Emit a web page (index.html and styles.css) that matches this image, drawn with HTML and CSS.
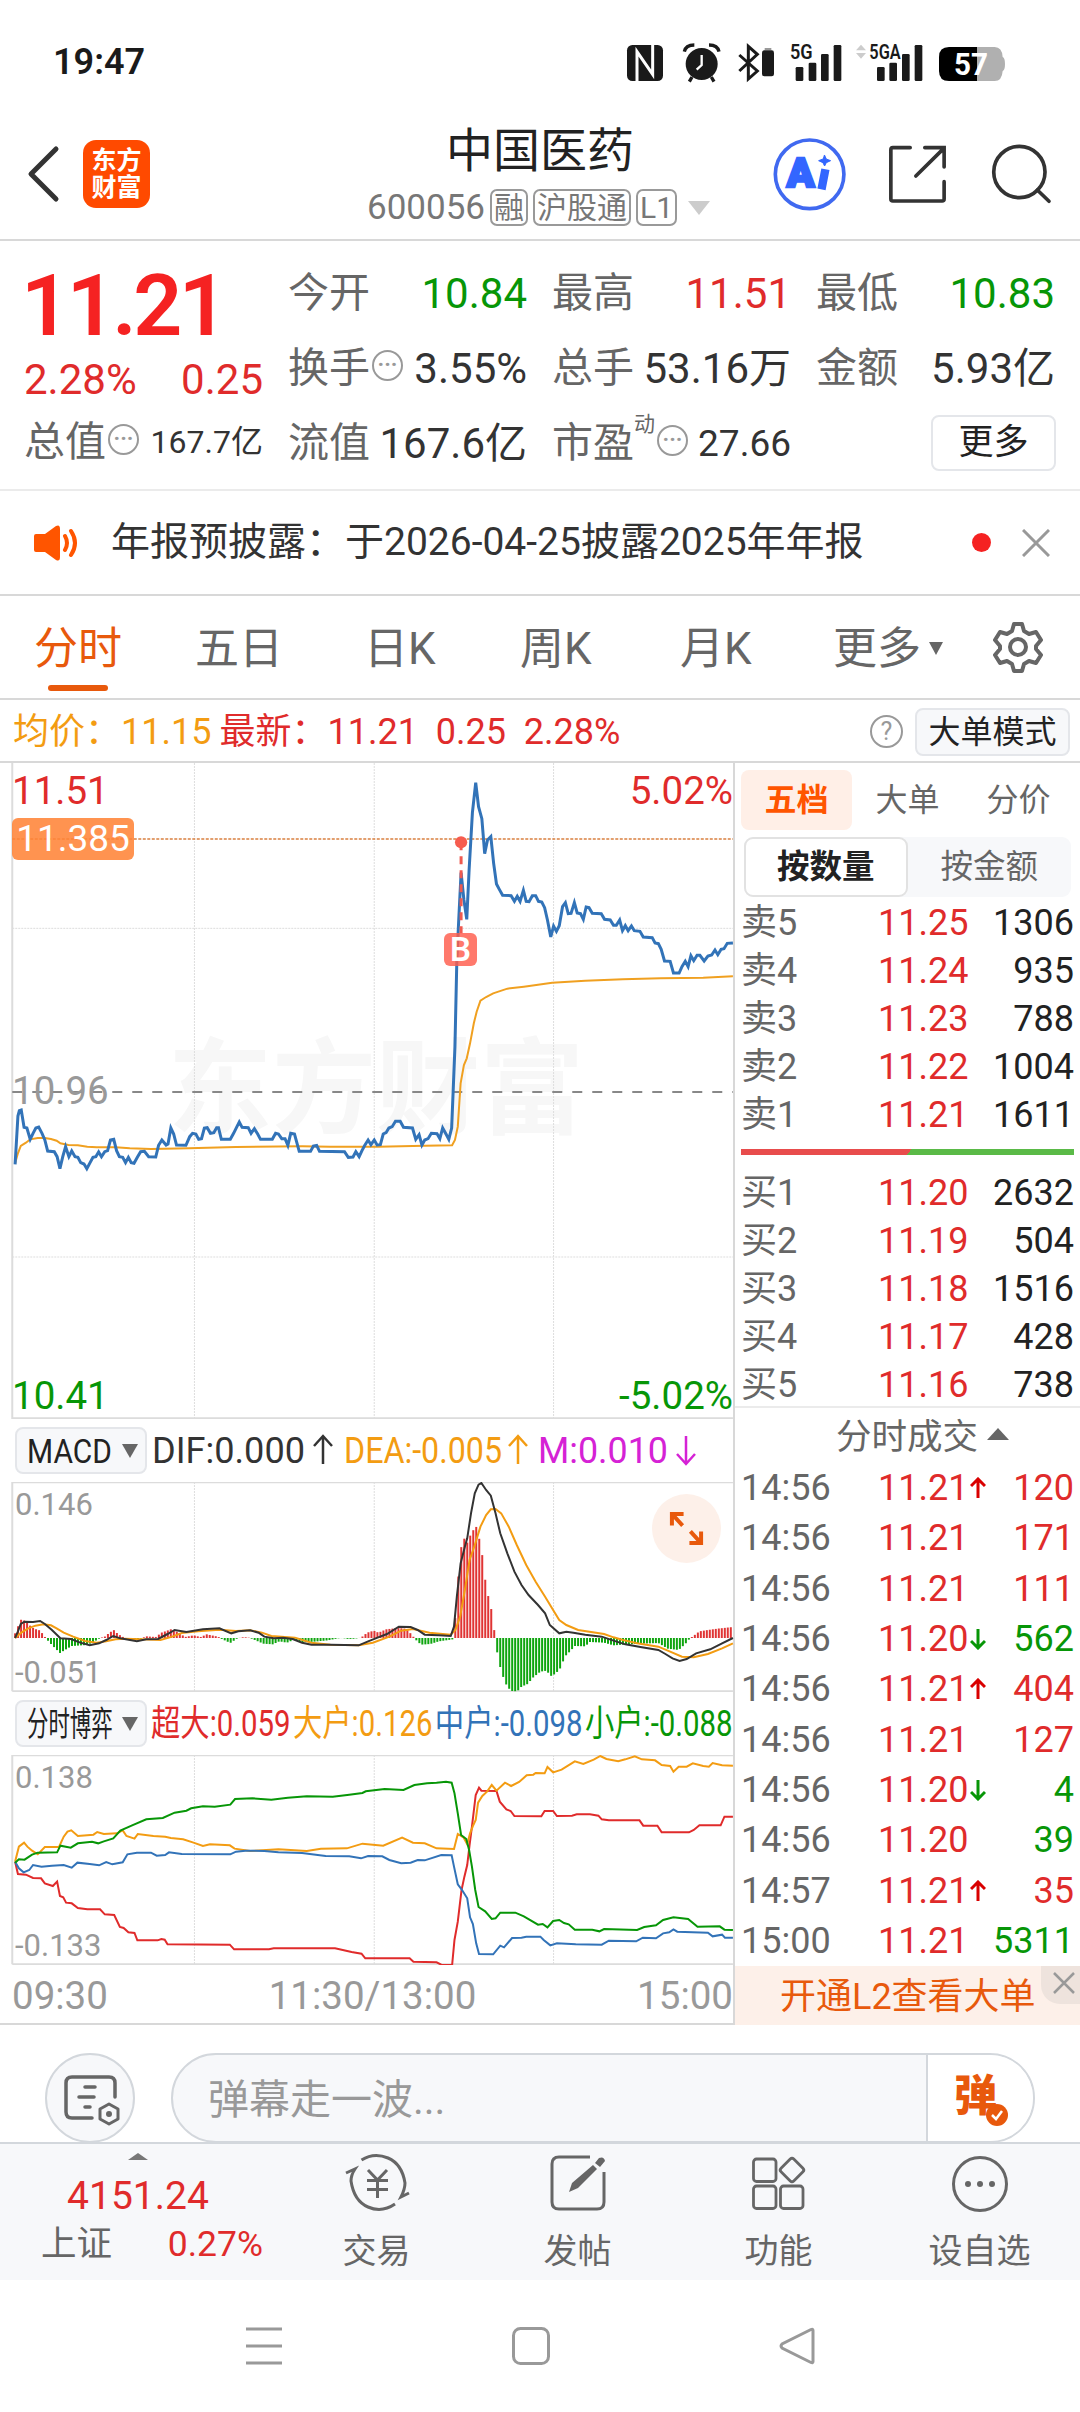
FILE: index.html
```
<!DOCTYPE html>
<html lang="zh-CN">
<head>
    <meta charset="UTF-8">
    <meta name="viewport" content="width=device-width, initial-scale=1.0">
    <title>中国医药 600056</title>
    <link rel="stylesheet" href="styles.css">
</head>
<body>
    <div class="status-bar">
        <span class="clock">19:47</span>
        <svg class="status-icons" viewBox="60 24 1200 138">
            <rect x="81" y="42" width="108" height="108" rx="16" fill="#1a1a1a"/>
            <path d="M111 150V62L158 130V42" fill="none" stroke="#fff" stroke-width="9"/>
            <circle cx="305" cy="99" r="48" fill="#1a1a1a"/>
            <path d="M253 62q4-20 30-20M357 62q-4-20-30-20" fill="none" stroke="#1a1a1a" stroke-width="10"/>
            <path d="M276 138l-8 14M334 138l8 14" stroke="#1a1a1a" stroke-width="10"/>
            <path d="M305 72v30l-15 14" fill="none" stroke="#fff" stroke-width="7"/>
            <path d="M418 72l54 48-27 24V46l27 24-54 50" fill="none" stroke="#1a1a1a" stroke-width="9"/>
            <rect x="486" y="58" width="36" height="78" rx="7" fill="#1a1a1a"/>
            <rect x="494" y="51" width="20" height="6" fill="#999"/>
            <text x="570" y="85" class="net" textLength="68" lengthAdjust="spacingAndGlyphs">5G</text>
            <g fill="#1a1a1a">
                <rect x="587" y="108" width="23" height="42" rx="4"/>
                <rect x="626" y="95" width="23" height="55" rx="4"/>
                <rect x="663" y="69" width="23" height="81" rx="4"/>
                <rect x="701" y="42" width="23" height="108" rx="4"/>
                <rect x="831" y="108" width="23" height="42" rx="4"/>
                <rect x="868" y="95" width="23" height="55" rx="4"/>
                <rect x="906" y="69" width="23" height="81" rx="4"/>
                <rect x="944" y="42" width="23" height="108" rx="4"/>
            </g>
            <path d="M768 58l15-17 15 17zM768 66l15 17 15-17z" fill="#ccc"/>
            <text x="808" y="85" class="net" textLength="94" lengthAdjust="spacingAndGlyphs">5GA</text>
            <path d="M1131 48h53q22 0 24 30q7 3 7 21t-7 21q-2 30-24 30h-53z" fill="#b0b0b0"/>
            <path d="M1131 48h-84q-30 0-30 30v42q0 30 30 30h84z" fill="#000"/>
            <text x="1062" y="132" class="battery" textLength="102" lengthAdjust="spacingAndGlyphs">57</text>
        </svg>
    </div>

    <div class="header">
        <svg class="back" viewBox="0 0 34 60"><path d="M30 5L5 30 30 55" fill="none" stroke="#333" stroke-width="5" stroke-linecap="round" stroke-linejoin="round"/></svg>
        <div class="logo">东方<br>财富</div>
        <div class="title">
            <h1>中国医药</h1>
            <div class="code">600056<i>融</i><i>沪股通</i><i>L1</i><b class="tri"></b></div>
        </div>
        <svg class="header-icons" viewBox="510 315 850 240" fill="none" stroke="#333" stroke-width="11" stroke-linecap="round">
            <circle cx="626" cy="433" r="103" stroke="#4069f0"/>
            <text x="557" y="472" class="ai" stroke="#3366ff" stroke-width="8">A</text>
            <path d="M671 376l5 11 13 5-13 6-5 10-5-10-13-6 13-5z" fill="#3366ff" stroke="#3366ff" stroke-width="3"/>
            <path d="M671 430L664 466" stroke="#3366ff" stroke-width="25" stroke-linecap="square"/>
            <path d="M928 353H876q-6 0-6 6v148q0 6 6 6h148q6 0 6-6V455M972 353h58v58M1026 358L945 438"/>
            <circle cx="1256" cy="426" r="77"/>
            <path d="M1310 480L1345 514"/>
        </svg>
    </div>

    <div class="quote">
        <div class="price-col">
            <div class="price">11.21</div>
            <div class="line change red"><span>2.28%</span><span>0.25</span></div>
            <div class="line"><label>总值</label><em>···</em><span class="s32">167.7亿</span></div>
        </div>
        <div class="stat-col">
            <div class="line"><label>今开</label><span class="green">10.84</span></div>
            <div class="line"><label>换手</label><em>···</em><span>3.55%</span></div>
            <div class="line"><label>流值</label><span>167.6亿</span></div>
        </div>
        <div class="stat-col">
            <div class="line"><label>最高</label><span class="red">11.51</span></div>
            <div class="line"><label>总手</label><span>53.16万</span></div>
            <div class="line"><label>市盈</label><sup>动</sup><em>···</em><span class="s37">27.66</span></div>
        </div>
        <div class="stat-col">
            <div class="line"><label>最低</label><span class="green">10.83</span></div>
            <div class="line"><label>金额</label><span>5.93亿</span></div>
            <div class="line"><button class="more">更多</button></div>
        </div>
    </div>

    <div class="notice">
        <svg class="speaker" viewBox="0 0 46 36"><path d="M2 9h9L22 1q4-2 4 3v28q0 5-4 3L11 27H2q-2 0-2-2V11q0-2 2-2z" fill="#ff5500"/><path d="M31 11q4 7 0 14M37 6q8 12 0 24" fill="none" stroke="#ff5500" stroke-width="4" stroke-linecap="round"/></svg>
        <span class="notice-text">年报预披露：于2026-04-25披露2025年年报</span>
        <i class="dot"></i>
        <svg class="close" viewBox="0 0 28 28"><path d="M1 1L27 27M27 1L1 27" stroke="#999" stroke-width="3"/></svg>
    </div>

    <div class="tabs">
        <span class="active">分时</span>
        <span>五日</span>
        <span>日K</span>
        <span>周K</span>
        <span>月K</span>
        <span>更多<b class="tri"></b></span>
        <svg class="gear" viewBox="0 0 52 52" fill="none" stroke="#666" stroke-width="4"><path d="M22 3h8l2 7 5 3 7-2 5 8-5 6v3l5 6-5 8-7-2-5 3-2 7h-8l-2-7-5-3-7 2-5-8 5-6v-3l-5-6 5-8 7 2 5-3z" stroke-linejoin="round"/><circle cx="26" cy="26" r="8"/></svg>
    </div>

    <div class="info">
        <span class="orange">均价：11.15</span>
        <span class="red">最新：11.21&nbsp; 0.25&nbsp; 2.28%</span>
        <em class="help">?</em>
        <button class="mode">大单模式</button>
    </div>

    <div class="main">
        <div class="charts">
            <div class="chart chart-price">
                <div class="watermark">东方财富</div>
                <svg viewBox="0 9 1557.4 1968" preserveAspectRatio="none">
                    <path class="grid" d="M412 9V1977M793 9V1977M1173 9V1977M26 505H1553M26 1491H1553"/>
                    <path class="frame" d="M26 9V1975H1553"/>
                    <path class="cur" d="M26 237H1553"/>
                    <path class="base" d="M26 996H1553"/>
                    <polyline class="avg" points="32,1210 38,1180 44,1158 55,1148 64,1138 80,1134 95,1134 108,1137 120,1142 128,1150 145,1155 165,1156 185,1160 205,1162 245,1162 275,1165 320,1167 400,1165 500,1161 640,1159 700,1160 800,1160 900,1157 958,1156 964,1140 970,1100 976,970 983,915 989,895 996,850 1004,790 1010,755 1018,722 1030,711 1045,700 1075,686 1110,680 1170,668 1240,662 1320,658 1400,655 1490,653 1553,649"/>
                    <polyline class="now" points="32,1213 38,1068 41,1052 45,1050 51,1102 57,1104 64,1138 70,1120 76,1104 82,1101 89,1120 95,1140 101,1173 115,1175 121,1190 127,1226 133,1190 139,1160 146,1190 152,1173 159,1190 165,1192 171,1208 178,1212 184,1226 190,1210 197,1192 203,1190 209,1176 215,1190 222,1175 228,1172 234,1140 241,1138 247,1172 253,1190 260,1192 266,1208 272,1192 278,1208 284,1210 291,1192 298,1175 306,1174 315,1190 330,1191 336,1156 343,1140 352,1155 356,1152 362,1104 368,1122 374,1155 394,1156 402,1130 408,1120 415,1122 421,1138 427,1136 433,1104 439,1103 446,1120 453,1118 459,1103 463,1103 469,1138 488,1138 495,1120 501,1103 507,1086 513,1102 526,1103 532,1120 539,1106 546,1122 552,1138 577,1138 584,1120 590,1122 597,1136 604,1136 610,1156 616,1120 624,1122 634,1174 658,1174 664,1158 671,1156 677,1174 730,1175 738,1192 748,1191 754,1175 761,1190 767,1172 773,1156 780,1140 786,1154 793,1140 799,1155 806,1154 812,1122 818,1118 824,1104 831,1100 838,1084 848,1084 855,1102 874,1104 881,1138 888,1124 894,1155 900,1140 907,1136 914,1120 926,1121 932,1136 938,1104 945,1122 951,1138 957,1104 960,1000 964,860 968,600 972,480 977,338 983,420 989,478 994,330 1001,158 1008,68 1014,140 1021,176 1027,281 1033,240 1040,230 1046,310 1052,372 1058,388 1065,406 1083,407 1090,424 1096,409 1102,424 1109,391 1115,424 1121,425 1128,407 1135,407 1141,424 1148,426 1154,443 1160,480 1167,531 1173,498 1179,514 1185,497 1192,440 1198,428 1204,461 1210,460 1217,428 1223,459 1230,461 1236,478 1242,441 1248,443 1255,460 1274,461 1281,478 1293,480 1300,496 1306,496 1313,480 1319,512 1325,497 1331,512 1338,498 1344,512 1356,514 1363,531 1382,533 1388,549 1395,551 1401,568 1408,603 1420,604 1427,639 1439,639 1445,620 1452,604 1458,620 1464,587 1470,602 1477,586 1483,586 1492,603 1500,588 1508,585 1515,570 1521,584 1528,568 1534,566 1541,550 1553,549"/>
                    <path class="buy-line" d="M977 247V520"/>
                    <ellipse cx="977" cy="247" rx="13" ry="18" fill="#f65c4f"/>
                </svg>
                <span class="lb top red">11.51</span>
                <span class="lb top right red">5.02%</span>
                <span class="lb cost">11.385</span>
                <span class="lb mid">10.96</span>
                <span class="lb bottom green">10.41</span>
                <span class="lb bottom right green">-5.02%</span>
                <span class="buy">B</span>
            </div>

            <div class="legend">
                <button><u class="macd">MACD</u><b class="tri"></b></button>
                <svg viewBox="0 0 582 63">
                    <text x="1" y="44" textLength="153" lengthAdjust="spacingAndGlyphs" fill="#333">DIF:0.000</text>
                    <path d="M172 17V45M163 27l9-10 9 10" stroke="#333"/>
                    <text x="193" y="44" textLength="158" lengthAdjust="spacingAndGlyphs" fill="#f39c12">DEA:-0.005</text>
                    <path d="M367 17V45M358 27l9-10 9 10" stroke="#f39c12"/>
                    <text x="387" y="44" textLength="130" lengthAdjust="spacingAndGlyphs" fill="#d522d5">M:0.010</text>
                    <path d="M535 17V45M526 35l9 10 9-10" stroke="#d522d5"/>
                </svg>
            </div>

            <div class="chart chart-sub">
                <svg viewBox="0 216 1557.4 630" preserveAspectRatio="none">
                    <path class="grid" d="M412 216V846M793 216V846M1173 216V846"/>
                    <path class="frame" d="M26 844V217H1553M26 844H1553"/>
                    <g id="macdBars"></g>
                    <polyline class="thin" stroke="#f39c12" points="32,684 45,668 60,655 75,647 92,643 108,646 120,655 135,668 155,680 180,693 205,698 225,694 245,688 265,686 300,688 340,690 365,680 385,669 420,664 465,659 500,663 530,661 555,668 575,678 625,683 660,698 700,704 760,706 790,698 825,680 850,662 875,657 910,668 955,674 965,660 975,620 985,540 995,450 1005,410 1018,350 1030,315 1040,298 1050,297 1062,310 1078,350 1095,405 1115,465 1135,515 1155,560 1172,600 1185,630 1200,645 1225,660 1280,672 1300,682 1320,690 1350,700 1395,710 1420,725 1445,740 1470,742 1500,732 1530,715 1553,700"/>
                    <polyline class="thin" stroke="#333" points="32,684 38,664 44,642 52,635 70,636 85,633 95,642 110,660 128,685 150,687 170,698 190,706 210,700 225,690 240,678 255,685 290,694 310,688 335,687 355,672 370,660 395,666 430,658 465,655 490,670 505,664 530,661 548,668 560,680 580,685 600,683 620,687 640,698 660,704 700,704 760,706 780,694 800,683 820,672 845,650 870,651 885,660 900,674 930,676 955,678 962,650 968,560 976,460 985,410 990,385 998,310 1006,250 1014,224 1020,219 1030,240 1040,257 1050,310 1060,370 1075,430 1090,485 1105,525 1120,555 1140,585 1155,610 1165,645 1185,670 1200,665 1215,668 1240,674 1275,680 1300,692 1325,703 1360,712 1395,720 1410,732 1425,745 1440,753 1455,747 1475,730 1505,718 1530,700 1553,684"/>
                </svg>
                <span class="lb small top">0.146</span>
                <span class="lb small bottom">-0.051</span>
                <div class="expand">
                    <svg viewBox="0 0 36 36" fill="none" stroke="#e8590c" stroke-width="4"><path d="M15 3H3V15M3 3L14 15M33 21V33H21M33 33L22 21"/></svg>
                </div>
            </div>

            <div class="legend">
                <button><u>分时博弈</u><b class="tri"></b></button>
                <div class="values">
                    <span class="red">超大:0.059</span>
                    <span class="orange">大户:0.126</span>
                    <span class="blue">中户:-0.098</span>
                    <span class="green">小户:-0.088</span>
                </div>
            </div>

            <div class="chart chart-sub">
                <svg viewBox="0 165 1557.4 630" preserveAspectRatio="none">
                    <path class="grid" d="M412 165V795M793 165V795M1173 165V795"/>
                    <path class="frame" d="M26 793V166H1553M26 793H1553"/>
                    <polyline class="thin" stroke="#e02b2b" points="32,485 38,522 55,524 70,534 87,535 95,550 112,558 121,545 127,588 134,592 140,608 152,610 165,624 185,628 212,628 222,643 242,645 254,681 262,684 272,697 285,699 291,721 334,721 342,717 349,719 355,733 487,734 496,748 570,748 580,745 710,745 745,756 766,761 774,775 868,775 876,785 925,787 935,794 958,795 963,720 970,665 978,570 984,530 990,495 995,435 1000,380 1008,285 1015,263 1020,272 1052,273 1059,305 1073,328 1082,333 1090,348 1147,349 1154,333 1172,333 1180,348 1212,347 1222,343 1250,343 1268,347 1275,358 1290,361 1355,361 1363,377 1393,377 1402,397 1460,397 1470,390 1482,376 1527,376 1535,350 1553,350"/>
                    <polyline class="thin" stroke="#f39c12" points="32,485 40,440 51,428 58,440 68,452 80,463 95,441 125,441 135,410 143,395 151,391 165,408 198,404 206,396 220,402 248,400 260,391 268,408 285,416 292,402 325,408 350,410 362,414 388,418 410,428 430,438 445,433 487,436 497,446 530,453 590,448 650,453 680,446 735,445 768,431 812,437 852,413 875,428 900,430 925,445 962,447 970,402 982,412 990,433 996,400 1003,375 1008,360 1013,308 1022,288 1032,275 1042,255 1052,272 1070,248 1083,258 1100,246 1116,226 1130,224 1135,219 1154,220 1160,201 1172,217 1190,209 1218,184 1236,192 1258,179 1272,168 1285,177 1310,184 1325,178 1345,169 1360,178 1388,181 1402,195 1420,198 1427,215 1438,200 1455,200 1468,190 1490,198 1502,200 1510,189 1530,196 1553,197"/>
                    <polyline class="thin" stroke="#3273b8" points="32,485 40,505 50,517 62,510 70,495 88,500 110,497 135,495 152,503 164,488 190,492 210,496 225,486 238,493 260,487 270,463 290,458 320,458 332,467 350,465 358,457 385,462 488,463 500,455 520,452 560,453 590,457 640,459 690,468 740,469 765,475 780,468 810,469 825,480 850,490 870,488 885,480 900,481 935,465 957,466 962,500 970,553 978,568 990,595 996,652 1002,672 1009,730 1015,762 1045,763 1060,737 1068,742 1085,714 1105,713 1115,710 1145,710 1152,720 1166,736 1180,730 1220,733 1275,734 1290,722 1348,724 1362,713 1390,715 1405,700 1418,697 1427,688 1435,695 1500,698 1510,709 1530,704 1536,713 1553,713"/>
                    <polyline class="thin" stroke="#079607" points="32,488 40,478 52,479 68,464 80,458 121,457 128,437 150,443 165,430 195,425 208,430 220,424 240,415 255,392 280,376 310,358 345,354 370,338 395,332 405,325 430,319 455,320 488,314 498,297 535,295 575,299 610,293 650,289 705,290 740,284 768,279 775,274 815,267 855,270 878,255 905,250 925,248 945,245 957,248 963,280 970,340 977,405 988,417 994,450 1000,500 1007,570 1014,621 1028,634 1042,657 1050,655 1060,638 1092,638 1110,649 1140,674 1150,672 1160,682 1172,663 1185,660 1195,669 1205,673 1218,689 1255,689 1270,694 1280,687 1350,690 1365,681 1390,676 1405,660 1427,652 1458,657 1478,680 1525,679 1535,689 1553,690"/>
                </svg>
                <span class="lb small top">0.138</span>
                <span class="lb small bottom">-0.133</span>
            </div>
            <div class="axis"><span>09:30</span><span>11:30/13:00</span><span>15:00</span></div>
        </div>

        <div class="side">
            <div class="side-tabs"><span class="active">五档</span><span>大单</span><span>分价</span></div>
            <div class="segment"><span class="active">按数量</span><span>按金额</span></div>
            <div class="book">
                <div><label>卖5</label><span>11.25</span><b>1306</b></div>
                <div><label>卖4</label><span>11.24</span><b>935</b></div>
                <div><label>卖3</label><span>11.23</span><b>788</b></div>
                <div><label>卖2</label><span>11.22</span><b>1004</b></div>
                <div><label>卖1</label><span>11.21</span><b>1611</b></div>
            </div>
            <div class="ratio"></div>
            <div class="book">
                <div><label>买1</label><span>11.20</span><b>2632</b></div>
                <div><label>买2</label><span>11.19</span><b>504</b></div>
                <div><label>买3</label><span>11.18</span><b>1516</b></div>
                <div><label>买4</label><span>11.17</span><b>428</b></div>
                <div><label>买5</label><span>11.16</span><b>738</b></div>
            </div>
            <div class="ticks-title">分时成交<b class="tri"></b></div>
            <div class="ticks">
                <div><label>14:56</label><span>11.21</span><svg viewBox="0 0 16 22"><path d="M8 21V2M1 9l7-7 7 7" stroke="#d90000"/></svg><b class="red">120</b></div>
                <div><label>14:56</label><span>11.21</span><b class="red">171</b></div>
                <div><label>14:56</label><span>11.21</span><b class="red">111</b></div>
                <div><label>14:56</label><span>11.20</span><svg viewBox="0 0 16 22"><path d="M8 1V20M1 13l7 7 7-7" stroke="#079607"/></svg><b class="green">562</b></div>
                <div><label>14:56</label><span>11.21</span><svg viewBox="0 0 16 22"><path d="M8 21V2M1 9l7-7 7 7" stroke="#d90000"/></svg><b class="red">404</b></div>
                <div><label>14:56</label><span>11.21</span><b class="red">127</b></div>
                <div><label>14:56</label><span>11.20</span><svg viewBox="0 0 16 22"><path d="M8 1V20M1 13l7 7 7-7" stroke="#079607"/></svg><b class="green">4</b></div>
                <div><label>14:56</label><span>11.20</span><b class="green">39</b></div>
                <div><label>14:57</label><span>11.21</span><svg viewBox="0 0 16 22"><path d="M8 21V2M1 9l7-7 7 7" stroke="#d90000"/></svg><b class="red">35</b></div>
                <div><label>15:00</label><span>11.21</span><b class="green">5311</b></div>
            </div>
            <div class="banner">开通L2查看大单
                <i><svg viewBox="0 0 22 22"><path d="M1 1L21 21M21 1L1 21" stroke="#999" stroke-width="2.5"/></svg></i>
            </div>
        </div>
    </div>

    <div class="chat">
        <div class="chat-set">
            <svg viewBox="0 0 56 52" fill="none" stroke="#666" stroke-width="3.5" stroke-linecap="round"><path d="M51 22V8q0-6-6-6H8Q2 2 2 8v29q0 6 6 6h20"/><path d="M21 12h10M15 22h15M21 32h5"/><path d="M45 29l9 5v10l-9 5-9-5V34z" stroke-width="3" stroke-linejoin="round"/><circle cx="45" cy="39" r="1.5" stroke-width="3"/></svg>
        </div>
        <div class="chat-input">
            <span>弹幕走一波...</span>
            <div class="dan">弹<svg viewBox="0 0 24 24"><circle cx="12" cy="12" r="11" fill="#e8590c"/><path d="M7 12l4 4 6-8" fill="none" stroke="#fff" stroke-width="2.5"/></svg></div>
        </div>
    </div>

    <div class="nav">
        <div class="index">
            <b class="tri"></b>
            <div class="point">4151.24</div>
            <div class="index-row"><span>上证</span><span class="red">0.27%</span></div>
        </div>
        <div class="nav-item">
            <svg viewBox="0 0 66 60" fill="none" stroke="#666" stroke-width="3"><path d="M17.500 7Q30-1 44 5T61 30Q61 36 57 44l8-4M51 51Q38 60 24 54T7 28Q7 22 11 16L2 20"/><path d="M24 17l9.500 10L43 17M23 27.500h21M23 36.500h21M33.500 27v18"/></svg>
            交易
        </div>
        <div class="nav-item">
            <svg viewBox="0 0 66 60"><path d="M45 4H14Q7 4 7 11v38q0 7 7 7h38q7 0 7-7V19" fill="none" stroke="#666" stroke-width="3"/><path d="M24 39l3-9 21-18 4 4-19 19zM50 10l4-5q5-2 6 3l-5 6z" fill="#666"/></svg>
            发帖
        </div>
        <div class="nav-item">
            <svg viewBox="0 0 66 60" fill="none" stroke="#666" stroke-width="2.800"><rect x="7.500" y="6" width="22.500" height="22.500" rx="3"/><rect x="7.500" y="33" width="22.500" height="22.500" rx="3"/><rect x="34.500" y="33" width="22.500" height="22.500" rx="3"/><rect x="37" y="8" width="18" height="18" rx="2.500" transform="rotate(45 46 17)"/></svg>
            功能
        </div>
        <div class="nav-item">
            <svg viewBox="0 0 66 60"><circle cx="33" cy="31" r="26.500" fill="none" stroke="#666" stroke-width="3"/><g fill="#666"><circle cx="21" cy="31" r="3"/><circle cx="33" cy="31" r="3"/><circle cx="45" cy="31" r="3"/></g></svg>
            设自选
        </div>
    </div>

    <div class="system">
        <svg viewBox="0 0 38 38"><path d="M1 2h36M1 19h36M1 36h36"/></svg>
        <svg viewBox="0 0 38 38"><rect x="1.500" y="1.500" width="35" height="35" rx="7"/></svg>
        <svg viewBox="0 0 38 38"><path d="M35 3.500v31q0 2-2 1L4 21q-2-2 0-4L33 2.500q2-1 2 1z"/></svg>
    </div>

    <script>
        // envelope of the MACD histogram, the zero line is at y = 684
        const zero = 684;
        const macd = [
            [32, 670], [38, 650], [44, 629], [52, 632], [62, 645], [72, 656], [84, 661], [92, 674], [97, 684],
            [104, 696], [115, 712], [127, 729], [140, 718], [152, 708], [185, 705], [203, 692], [212, 684],
            [222, 680], [232, 668], [241, 660], [250, 672], [262, 682], [270, 688], [290, 691], [301, 684],
            [310, 679], [330, 681], [342, 668], [362, 658], [378, 667], [392, 681], [410, 676], [425, 681],
            [438, 673], [462, 680], [470, 687], [488, 699], [502, 686], [512, 682], [525, 682], [535, 687],
            [558, 701], [578, 703], [592, 694], [608, 698], [622, 690], [640, 697], [665, 695], [695, 691],
            [716, 685], [726, 684], [738, 687], [752, 686], [765, 683], [778, 668], [792, 662], [802, 668],
            [818, 658], [842, 654], [860, 656], [872, 673], [880, 688], [892, 704], [912, 702], [930, 694],
            [950, 690], [960, 688], [963, 660], [970, 515], [977, 413], [984, 385], [990, 398], [996, 378],
            [1003, 360], [1008, 345], [1014, 376], [1021, 425], [1027, 500], [1034, 555], [1041, 598], [1047, 658],
            [1052, 715], [1058, 762], [1066, 800], [1075, 832], [1085, 843], [1096, 844], [1105, 830], [1118, 822],
            [1130, 802], [1145, 785], [1158, 782], [1167, 798], [1176, 792], [1186, 778], [1198, 738], [1208, 724],
            [1218, 708], [1240, 709], [1250, 696], [1280, 698], [1300, 706], [1340, 702], [1395, 699], [1415, 716],
            [1438, 720], [1452, 702], [1462, 685], [1470, 677], [1482, 664], [1500, 660], [1520, 656], [1553, 651]
        ];
        let bars = "";
        for (let x = 32; x <= 1555; x += 6.345) {
            const i = macd.findIndex(p => p[0] >= x);
            if (i < 0) break;
            const b = macd[i];
            const a = macd[i - 1] || b;
            const y = b === a ? b[1] : a[1] + (b[1] - a[1]) * (x - a[0]) / (b[0] - a[0]);
            bars += `<path d="M${x.toFixed(1)} ${zero}V${y.toFixed(1)}" stroke="${y < zero ? "#e03434" : "#0fa50f"}"/>`;
        }
        document.getElementById("macdBars").innerHTML = bars;
    </script>
</body>
</html>
```
FILE: styles.css
```
* {
    box-sizing: border-box;
}
body {
    margin: 0;
    width: 1080px;
    height: 2412px;
    background: #fff;
    color: #333;
    font-family: Roboto, "Noto Sans CJK SC", sans-serif;
    font-size: 36px;
    line-height: 1;
    overflow: hidden;
    white-space: nowrap;
}
i, em, u {
    font-style: normal;
    text-decoration: none;
}
svg {
    display: block;
    flex: none;
}
button {
    font-family: inherit;
    line-height: 1;
    padding: 0;
    color: #222;
    background: #f7f8fa;
    border: 2px solid #e4e6ea;
    border-radius: 8px;
}
.red {
    color: #e02b2b;
}
.green {
    color: #079607;
}
.orange {
    color: #f39c12;
}
.blue {
    color: #3273b8;
}
.tri {
    display: inline-block;
    border: 8px solid transparent;
    border-top: 14px solid #666;
    border-bottom: 0;
}

/* status bar */
.status-bar {
    height: 123px;
    padding: 0 60px 0 53px;
    display: flex;
    justify-content: space-between;
    align-items: center;
}
.clock {
    font-size: 36px;
    font-weight: 600;
    color: #1a1a1a;
}
.status-icons {
    width: 400px;
    height: 46px;
}
.net {
    font-size: 62px;
    font-weight: 600;
    fill: #1a1a1a;
}
.battery {
    font-size: 92px;
    font-weight: 700;
    fill: #fff;
}

/* header */
.header {
    height: 118px;
    padding: 0 26px 0 26px;
    border-bottom: 2px solid #d8d8d8;
    display: flex;
    align-items: center;
}
.back {
    width: 34px;
    height: 60px;
    margin-top: -14px;
}
.logo {
    width: 67px;
    height: 68px;
    margin: -14px 0 0 23px;
    padding-top: 7px;
    border-radius: 13px;
    background: #ff4a00;
    color: #fff;
    font-size: 25px;
    font-weight: 700;
    line-height: 27px;
    text-align: center;
}
.title {
    width: 380px;
    margin: -9px 0 0 200px;
    text-align: center;
}
.title h1 {
    margin: 0;
    font-size: 47px;
    font-weight: 400;
    color: #222;
}
.code {
    display: flex;
    align-items: center;
    margin: 15px 0 0 17px;
    font-size: 35px;
    color: #777;
}
.code i {
    height: 37px;
    margin-left: 5px;
    padding: 0 2px;
    border: 2px solid #999;
    border-radius: 7px;
    font-size: 30px;
    line-height: 33px;
}
.code .tri {
    margin-left: 11px;
    border-width: 14px 11px 0;
    border-top-color: #ccc;
}
.header-icons {
    width: 283px;
    height: 80px;
    margin: -12px 0 0 auto;
}
.ai {
    font-size: 122px;
    font-weight: 900;
    fill: #3366ff;
}

/* quote */
.quote {
    height: 250px;
    padding: 15px 25px 0 24px;
    border-bottom: 2px solid #ebebeb;
    display: flex;
}
.price-col {
    width: 239px;
    padding-top: 6px;
}
.price {
    height: 81px;
    margin-left: -3px;
    font-size: 86px;
    line-height: 88px;
    font-weight: 600;
    letter-spacing: -3.5px;
    color: #f52222;
}
.stat-col {
    width: 239px;
    margin-left: 25px;
}
.line {
    height: 75px;
    display: flex;
    align-items: center;
    font-size: 42px;
}
.price-col .line + .line {
    height: 50px;
}
.price-col .line {
    height: 74px;
}
.line span {
    margin-left: auto;
}
.change span:first-child {
    margin-left: 0;
}
.line label {
    color: #666;
    font-size: 41px;
}
.line em {
    width: 31px;
    height: 31px;
    margin: -6px 0 0 2px;
    border: 2.5px solid #999;
    border-radius: 50%;
    color: #999;
    font-size: 22px;
    line-height: 26px;
    font-weight: 700;
    text-align: center;
}
.line sup {
    align-self: flex-start;
    margin-top: 6px;
    font-size: 21px;
    line-height: 24px;
    color: #666;
}
.line .s32 {
    font-size: 32px;
}
.line .s37 {
    font-size: 37px;
}
.more {
    width: 125px;
    height: 56px;
    margin: -2px -1px 0 auto;
    background: #fff;
    font-size: 35px;
    line-height: 48px;
}

/* notice */
.notice {
    height: 105px;
    padding: 0 30px 0 34px;
    border-bottom: 2px solid #d8d8d8;
    display: flex;
    align-items: center;
}
.speaker {
    width: 46px;
    height: 36px;
}
.notice-text {
    margin-left: 31px;
    font-size: 39px;
}
.dot {
    width: 19px;
    height: 19px;
    margin-left: auto;
    border-radius: 50%;
    background: #f52222;
}
.close {
    width: 28px;
    height: 28px;
    margin-left: 31px;
}

/* period tabs */
.tabs {
    height: 104px;
    padding: 3px 36px 0 34px;
    border-bottom: 2px solid #d8d8d8;
    display: grid;
    grid-template-columns: 161px 169px 156px 160px 153px 1fr 52px;
    align-items: center;
    font-size: 44px;
    color: #666;
}
.tabs .active {
    position: relative;
    color: #e8590c;
}
.tabs .active::after {
    content: "";
    position: absolute;
    left: 14px;
    bottom: -20px;
    width: 60px;
    height: 6px;
    border-radius: 3px;
    background: #e8590c;
}
.tabs .tri {
    margin-left: 8px;
    vertical-align: 9px;
    border-width: 13px 7px 0;
}
.gear {
    width: 52px;
    height: 52px;
    margin-top: -4px;
}

/* average / latest line */
.info {
    height: 61px;
    padding: 2px 10px 0 13px;
    display: flex;
    align-items: center;
}
.info .red {
    margin-left: 8px;
}
.help {
    width: 33px;
    height: 33px;
    margin: 0 12px 0 auto;
    border: 2.5px solid #999;
    border-radius: 50%;
    color: #999;
    font-size: 25px;
    line-height: 29px;
    text-align: center;
}
.mode {
    width: 155px;
    height: 48px;
    font-size: 32px;
}

/* main area */
.main {
    height: 1264px;
    border-top: 2px solid #d8d8d8;
    border-bottom: 2px solid #d8d8d8;
    display: flex;
}
.charts {
    width: 735px;
    border-right: 2px solid #d8d8d8;
}
.chart {
    position: relative;
}
.chart > svg {
    position: relative;
    width: 735px;
    height: 100%;
}
.chart-price {
    height: 656px;
}
.chart-sub {
    height: 210px;
}
.chart path, .chart polyline {
    fill: none;
    vector-effect: non-scaling-stroke;
}
.grid {
    stroke: #ddd;
    stroke-dasharray: 2 1;
}
.frame {
    stroke: #dcdcdc;
    stroke-width: 2;
}
.cur {
    stroke: #d98040;
    stroke-width: 1.5;
    stroke-dasharray: 3 1.5;
}
.base {
    stroke: #888;
    stroke-width: 2;
    stroke-dasharray: 10 10;
}
.avg {
    stroke: #f0a020;
    stroke-width: 2;
}
.now {
    stroke: #3273b8;
    stroke-width: 3;
}
.buy-line {
    stroke: #ef5a50;
    stroke-width: 3;
    stroke-dasharray: 8 6;
}
.thin {
    stroke-width: 2;
}
#macdBars path {
    stroke-width: 2;
}
.watermark {
    position: absolute;
    left: 168px;
    top: 276px;
    font-size: 104px;
    font-weight: 700;
    color: #f7f7f7;
}
.lb {
    position: absolute;
    left: 12px;
    font-size: 38.5px;
    color: #999;
}
.lb.red {
    color: #e02b2b;
}
.lb.green {
    color: #079607;
}
.lb.right {
    left: auto;
    right: 0;
}
.chart-price .top {
    top: 9px;
}
.chart-price .bottom {
    bottom: 4px;
}
.chart-price .mid {
    top: 309px;
}
.chart-price .cost {
    left: 12px;
    top: 55px;
    width: 122px;
    height: 42px;
    border-radius: 6px;
    background: rgba(255, 132, 56, 0.88);
    color: #fff;
    font-size: 37px;
    line-height: 42px;
    text-align: center;
}
.buy {
    position: absolute;
    left: 444px;
    top: 170px;
    width: 33px;
    height: 33px;
    border-radius: 6px;
    background: rgba(255, 92, 76, 0.82);
    color: #fff;
    font-size: 33px;
    font-weight: 600;
    line-height: 34px;
    text-align: center;
}
.lb.small {
    left: 15px;
    font-size: 31px;
}
.small.top {
    top: 7px;
}
.small.bottom {
    bottom: 4px;
}
.expand {
    position: absolute;
    left: 652px;
    top: 12px;
    width: 69px;
    height: 69px;
    padding: 17px;
    border-radius: 50%;
    background: #fdf0e9;
}
.legend {
    height: 63px;
    padding-left: 15px;
    display: flex;
    align-items: center;
}
.legend button {
    display: flex;
    flex: none;
    align-items: center;
    width: 132px;
    height: 47px;
    padding-left: 10px;
}
.legend .tri {
    margin-left: 9px;
}
/* condensed captions */
.legend u {
    width: 86px;
    font-size: 34px;
    text-align: left;
    transform: scaleX(0.63);
    transform-origin: left;
}
.legend .macd {
    transform: scaleX(0.88);
}
.values {
    display: flex;
    gap: 3px;
    width: 578px;
    margin-left: 4px;
    transform: scaleX(0.815);
    transform-origin: left;
}
.legend svg {
    width: 582px;
    height: 63px;
    margin-left: 4px;
    fill: none;
    stroke-width: 2.5;
}
.axis {
    height: 60px;
    padding: 3px 0 0 12px;
    display: flex;
    align-items: center;
    justify-content: space-between;
    font-size: 38.5px;
    color: #999;
}

/* order book */
.side {
    width: 345px;
    padding-left: 6px;
}
.side-tabs {
    display: flex;
    height: 60px;
    margin-top: 7px;
    line-height: 60px;
    text-align: center;
    font-size: 32px;
    color: #666;
}
.side-tabs span {
    width: 111px;
}
.side-tabs .active {
    border-radius: 8px;
    background: #ffefe7;
    color: #ff5500;
    font-weight: 700;
}
.segment {
    display: flex;
    width: 327px;
    height: 60px;
    margin: 7px 0 2px 3px;
    border-radius: 9px;
    background: #f7f8fa;
    line-height: 60px;
    text-align: center;
    font-size: 32.5px;
    color: #666;
}
.segment span {
    width: 50%;
}
.segment .active {
    border: 2px solid #e2e2e2;
    border-radius: 9px;
    background: #fff;
    color: #222;
    font-weight: 700;
    line-height: 56px;
}
.book div, .ticks div {
    display: flex;
    align-items: center;
    height: 48px;
    padding: 0 6px 0 0;
}
.book label, .ticks label {
    width: 137px;
    color: #666;
}
.book span, .ticks span {
    color: #e02b2b;
}
.book b, .ticks b {
    margin-left: auto;
    font-weight: 400;
}
.book b {
    color: #222;
}
.ratio {
    width: 333px;
    height: 6px;
    margin: 10px 0 14px;
    background: linear-gradient(125deg, #e84c4c 50.5%, #5aba47 50.5%);
}
.ticks-title {
    height: 57px;
    margin: -3px 0 0 -6px;
    padding-left: 101px;
    border-top: 2px solid #ebebeb;
    font-size: 35.5px;
    line-height: 58px;
    color: #666;
}
.ticks-title .tri {
    margin-left: 9px;
    vertical-align: 9px;
    border: 11px solid transparent;
    border-top: 0;
    border-bottom: 12px solid #666;
}
.ticks div {
    height: 50.3px;
}
.ticks svg {
    width: 16px;
    height: 22px;
    margin-left: 2px;
    fill: none;
    stroke-width: 3;
}
.banner {
    position: relative;
    height: 59px;
    margin-left: -6px;
    padding-left: 45px;
    background: #fdf0e9;
    color: #e8590c;
    line-height: 63px;
}
.banner i {
    position: absolute;
    right: 0;
    top: 0;
    width: 39px;
    height: 38px;
    padding: 6px 0 0 12px;
    border-bottom-left-radius: 19px;
    background: #eee3dd;
}
.banner svg {
    width: 22px;
    height: 22px;
}

/* comment input */
.chat {
    height: 119px;
    padding: 28px 45px 0;
    border-bottom: 2px solid #d3d7dc;
    display: flex;
}
.chat-set {
    width: 90px;
    height: 90px;
    padding: 20px 17px;
    border: 2px solid #d3d7dc;
    border-radius: 50%;
    background: #f7f8fa;
}
.chat-set svg {
    width: 56px;
    height: 52px;
}
.chat-input {
    display: flex;
    width: 865px;
    height: 90px;
    margin-left: 36px;
    padding-left: 35px;
    border: 2px solid #d3d7dc;
    border-radius: 45px;
    background: #f7f8fa;
    font-size: 41px;
    line-height: 90px;
    color: #999;
    overflow: hidden;
}
.dan {
    position: relative;
    width: 107px;
    margin-left: auto;
    padding-left: 26px;
    border-left: 2px solid #d3d7dc;
    background: #fff;
    color: #e8590c;
    font-size: 43px;
    font-weight: 900;
    line-height: 82px;
}
.dan svg {
    position: absolute;
    left: 57px;
    top: 48px;
    width: 24px;
    height: 24px;
}

/* bottom navigation */
.nav {
    height: 136px;
    background: #f7f8fa;
    display: flex;
    color: #666;
    font-size: 34px;
}
.index {
    width: 276px;
    padding-top: 4px;
    text-align: center;
}
.index .tri {
    display: block;
    width: 20px;
    margin: 5px auto 0;
    border: 10px solid transparent;
    border-top: 0;
    border-bottom: 7px solid #777;
}
.point {
    margin-top: 17px;
    font-size: 39px;
    color: #e02b2b;
}
.index-row {
    display: flex;
    justify-content: space-between;
    margin-top: 11px;
    padding: 0 13px 0 41px;
    font-size: 35.5px;
}
.nav-item {
    width: 201px;
    padding-top: 9px;
    text-align: center;
}
.nav-item svg {
    width: 66px;
    height: 60px;
    margin: 0 auto 21px;
}

/* system keys */
.system {
    height: 132px;
    padding: 0 264px 0 245px;
    display: flex;
    align-items: center;
    justify-content: space-between;
}
.system svg {
    width: 38px;
    height: 38px;
    fill: none;
    stroke: #999;
    stroke-width: 3;
}
```
